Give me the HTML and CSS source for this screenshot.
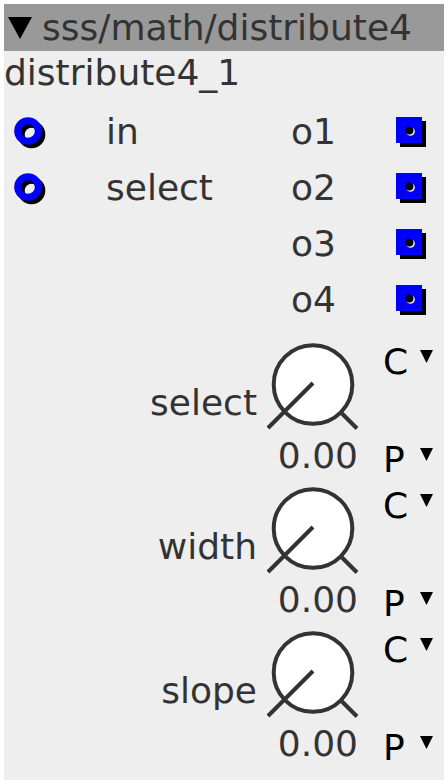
FILE: index.html
```html
<!DOCTYPE html>
<html>
<head>
    <title>distribute4</title>
    <link rel="stylesheet" href="styles.css">
</head>
<body>
    <div class="panel">
        <div class="header">
            <svg class="collapse" width="24" height="22" viewBox="0 0 24 22"><polygon points="0,0 24,0 12,22" fill="#000"/></svg>
            <span class="header-title">sss/math/distribute4</span>
        </div>
        <div class="instance">distribute4_1</div>

        <div class="ports">
            <div class="port-row">
                <div class="inlet">
                    <svg width="34" height="34" viewBox="0 0 34 34">
                        <circle cx="17.5" cy="17.5" r="10.3" fill="none" stroke="#000" stroke-width="7"/>
                        <circle cx="14" cy="14" r="10.3" fill="none" stroke="#0000ff" stroke-width="7"/>
                    </svg>
                </div>
                <div class="port-label">in</div>
                <div class="port-label">o1</div>
                <div class="outlet">
                    <svg width="31" height="31" viewBox="0 0 31 31">
                        <rect x="4" y="4" width="26" height="26" fill="#000"/>
                        <rect x="0" y="0" width="26" height="26" fill="#0000ff"/>
                        <rect x="4.5" y="4.5" width="17" height="17" fill="none" stroke="#000" stroke-width="1" stroke-dasharray="1 16"/>
                        <circle cx="14.5" cy="14.5" r="4.3" fill="#eee"/>
                        <circle cx="13.5" cy="13.5" r="3.9" fill="#000"/>
                    </svg>
                </div>
            </div>
            <div class="port-row">
                <div class="inlet">
                    <svg width="34" height="34" viewBox="0 0 34 34">
                        <circle cx="17.5" cy="17.5" r="10.3" fill="none" stroke="#000" stroke-width="7"/>
                        <circle cx="14" cy="14" r="10.3" fill="none" stroke="#0000ff" stroke-width="7"/>
                    </svg>
                </div>
                <div class="port-label">select</div>
                <div class="port-label">o2</div>
                <div class="outlet">
                    <svg width="31" height="31" viewBox="0 0 31 31">
                        <rect x="4" y="4" width="26" height="26" fill="#000"/>
                        <rect x="0" y="0" width="26" height="26" fill="#0000ff"/>
                        <rect x="4.5" y="4.5" width="17" height="17" fill="none" stroke="#000" stroke-width="1" stroke-dasharray="1 16"/>
                        <circle cx="14.5" cy="14.5" r="4.3" fill="#eee"/>
                        <circle cx="13.5" cy="13.5" r="3.9" fill="#000"/>
                    </svg>
                </div>
            </div>
            <div class="port-row">
                <div class="inlet"></div>
                <div class="port-label"></div>
                <div class="port-label">o3</div>
                <div class="outlet">
                    <svg width="31" height="31" viewBox="0 0 31 31">
                        <rect x="4" y="4" width="26" height="26" fill="#000"/>
                        <rect x="0" y="0" width="26" height="26" fill="#0000ff"/>
                        <rect x="4.5" y="4.5" width="17" height="17" fill="none" stroke="#000" stroke-width="1" stroke-dasharray="1 16"/>
                        <circle cx="14.5" cy="14.5" r="4.3" fill="#eee"/>
                        <circle cx="13.5" cy="13.5" r="3.9" fill="#000"/>
                    </svg>
                </div>
            </div>
            <div class="port-row">
                <div class="inlet"></div>
                <div class="port-label"></div>
                <div class="port-label">o4</div>
                <div class="outlet">
                    <svg width="31" height="31" viewBox="0 0 31 31">
                        <rect x="4" y="4" width="26" height="26" fill="#000"/>
                        <rect x="0" y="0" width="26" height="26" fill="#0000ff"/>
                        <rect x="4.5" y="4.5" width="17" height="17" fill="none" stroke="#000" stroke-width="1" stroke-dasharray="1 16"/>
                        <circle cx="14.5" cy="14.5" r="4.3" fill="#eee"/>
                        <circle cx="13.5" cy="13.5" r="3.9" fill="#000"/>
                    </svg>
                </div>
            </div>
        </div>

        <div class="knob-group">
            <div class="knob-label">select</div>
            <div class="knob-col">
                <svg class="knob" width="100" height="92" viewBox="0 0 100 92">
                    <circle cx="49" cy="44.5" r="39.3" fill="#fff" stroke="#333" stroke-width="4"/>
                    <line x1="49" y1="43" x2="4" y2="88" stroke="#333" stroke-width="4"/>
                    <line x1="77" y1="72.5" x2="93" y2="88.5" stroke="#333" stroke-width="4"/>
                </svg>
                <div class="knob-value">0.00</div>
            </div>
            <div class="knob-ctl">
                <div class="ctl ctl-c"><span class="ctl-letter">C</span><svg width="13" height="13" viewBox="0 0 13 13"><polygon points="0,0 13,0 6.5,13" fill="#000"/></svg></div>
                <div class="ctl ctl-p"><span class="ctl-letter">P</span><svg width="13" height="13" viewBox="0 0 13 13"><polygon points="0,0 13,0 6.5,13" fill="#000"/></svg></div>
            </div>
        </div>

        <div class="knob-group">
            <div class="knob-label">width</div>
            <div class="knob-col">
                <svg class="knob" width="100" height="92" viewBox="0 0 100 92">
                    <circle cx="49" cy="44.5" r="39.3" fill="#fff" stroke="#333" stroke-width="4"/>
                    <line x1="49" y1="43" x2="4" y2="88" stroke="#333" stroke-width="4"/>
                    <line x1="77" y1="72.5" x2="93" y2="88.5" stroke="#333" stroke-width="4"/>
                </svg>
                <div class="knob-value">0.00</div>
            </div>
            <div class="knob-ctl">
                <div class="ctl ctl-c"><span class="ctl-letter">C</span><svg width="13" height="13" viewBox="0 0 13 13"><polygon points="0,0 13,0 6.5,13" fill="#000"/></svg></div>
                <div class="ctl ctl-p"><span class="ctl-letter">P</span><svg width="13" height="13" viewBox="0 0 13 13"><polygon points="0,0 13,0 6.5,13" fill="#000"/></svg></div>
            </div>
        </div>

        <div class="knob-group">
            <div class="knob-label">slope</div>
            <div class="knob-col">
                <svg class="knob" width="100" height="92" viewBox="0 0 100 92">
                    <circle cx="49" cy="44.5" r="39.3" fill="#fff" stroke="#333" stroke-width="4"/>
                    <line x1="49" y1="43" x2="4" y2="88" stroke="#333" stroke-width="4"/>
                    <line x1="77" y1="72.5" x2="93" y2="88.5" stroke="#333" stroke-width="4"/>
                </svg>
                <div class="knob-value">0.00</div>
            </div>
            <div class="knob-ctl">
                <div class="ctl ctl-c"><span class="ctl-letter">C</span><svg width="13" height="13" viewBox="0 0 13 13"><polygon points="0,0 13,0 6.5,13" fill="#000"/></svg></div>
                <div class="ctl ctl-p"><span class="ctl-letter">P</span><svg width="13" height="13" viewBox="0 0 13 13"><polygon points="0,0 13,0 6.5,13" fill="#000"/></svg></div>
            </div>
        </div>
    </div>
</body>
</html>
```

FILE: styles.css
```css
body {
    margin: 0;
    background-color: #fff;
    font-family: "DejaVu Sans", sans-serif;
    font-size: 36px;
    line-height: 36px;
    color: #333;
}

.panel {
    margin: 4px;
    width: 440px;
    height: 776px;
    background-color: #eee;
}

.header {
    display: flex;
    align-items: center;
    height: 47px;
    background-color: #999;
}

.collapse {
    margin-left: 4px;
    margin-right: 10px;
}

.instance {
    padding-top: 4px;
    height: 49px;
}

.port-row {
    display: grid;
    grid-template-columns: 102px 185px 101px 1fr;
    height: 56px;
}

.port-label {
    padding-top: 10px;
}

.inlet {
    padding-left: 10px;
    padding-top: 13px;
}

.inlet svg,
.outlet svg {
    display: block;
}

.outlet {
    padding-left: 4px;
    padding-top: 13px;
}

.knob-group {
    display: flex;
    height: 144px;
}

.knob-label {
    flex: 1;
    text-align: right;
    padding-top: 57px;
    padding-right: 7px;
}

.knob-col {
    width: 100px;
    padding-top: 12px;
}

.knob {
    display: block;
}

.knob-value {
    margin-top: 6px;
    text-align: right;
    padding-right: 6px;
}

.knob-ctl {
    width: 61px;
    margin-left: 19px;
    color: #000;
}

.ctl {
    display: flex;
    align-items: flex-start;
}

.ctl-letter {
    width: 37px;
}

.ctl svg {
    margin-top: 6px;
}

.ctl-c {
    margin-top: 16px;
}

.ctl-p {
    margin-top: 62px;
}
```
